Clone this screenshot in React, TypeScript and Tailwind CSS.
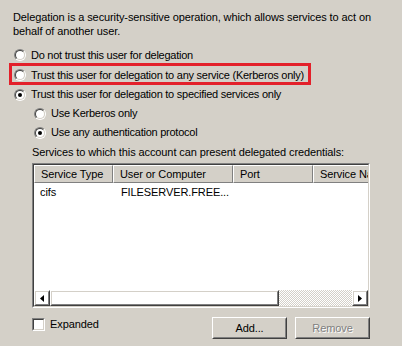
import React from 'react';

function Radio({ checked }: { checked?: boolean }) {
  return (
    <div className="w-[12px] h-[12px] rounded-full border border-t-[#808080] border-l-[#808080] border-b-white border-r-white shrink-0">
      <div className="w-full h-full rounded-full border border-t-[#404040] border-l-[#404040] border-b-[#d4d0c8] border-r-[#d4d0c8] bg-white flex items-center justify-center">
        {checked && <div className="w-[4px] h-[4px] rounded-full bg-black" />}
      </div>
    </div>
  );
}

function RadioRow({ checked, label, h = 'h-[19px]' }: { checked?: boolean; label: string; h?: string }) {
  return (
    <div className={`flex items-center gap-[5px] ${h}`}>
      <Radio checked={checked} />
      <span className="tracking-[-0.25px]">{label}</span>
    </div>
  );
}

function Raised({ children, className = '' }: { children?: React.ReactNode; className?: string }) {
  return (
    <div className={`border border-t-white border-l-white border-b-[#404040] border-r-[#404040] ${className}`}>
      <div className="w-full h-full border border-t-[#d4d0c8] border-l-[#d4d0c8] border-b-[#808080] border-r-[#808080] flex items-center justify-center">
        {children}
      </div>
    </div>
  );
}

const columns = [
  { name: 'Service Type', w: 'w-[79px]' },
  { name: 'User or Computer', w: 'w-[120px]' },
  { name: 'Port', w: 'w-[80px]' },
  { name: 'Service Name', w: 'w-[90px]' },
];

export default function App() {
  return (
    <div className="w-[402px] h-[346px] bg-[#d4d0c8] text-black text-[11px] tracking-[-0.1px] font-['Liberation_Sans',Arial,sans-serif] overflow-hidden pl-[13px] pt-[10px]">
      <p className="leading-[14px]">
        Delegation is a security-sensitive operation, which allows services to act on
        <br />
        behalf of another user.
      </p>

      <div className="mt-[7px] flex flex-col pl-[1px]">
        <RadioRow label="Do not trust this user for delegation" h="h-[20px]" />
        <div className="relative">
          <RadioRow label="Trust this user for delegation to any service (Kerberos only)" h="h-[20px]" />
          <div className="absolute -left-[5px] -top-[2px] w-[302px] h-[22px] border-[3px] border-[#e3202a]" />
        </div>
        <RadioRow checked label="Trust this user for delegation to specified services only" />
        <div className="pl-[20px] flex flex-col">
          <RadioRow label="Use Kerberos only" />
          <RadioRow checked label="Use any authentication protocol" />
        </div>
      </div>

      <div className="ml-[19px] w-[338px]">
        <div className="h-[20px] leading-[20px]">Services to which this account can present delegated credentials:</div>

        <div className="mt-[1px] h-[145px] border border-t-[#808080] border-l-[#808080] border-b-white border-r-white">
          <div className="w-full h-full border border-t-[#404040] border-l-[#404040] border-b-[#d4d0c8] border-r-[#d4d0c8] bg-white flex flex-col overflow-hidden">
            <div className="flex h-[18px] shrink-0 bg-[#d4d0c8]">
              {columns.map((c) => (
                <div
                  key={c.name}
                  className={`${c.w} shrink-0 border border-t-white border-l-white border-b-[#808080] border-r-[#808080] pl-[6px] leading-[16px] whitespace-nowrap overflow-hidden`}
                >
                  {c.name}
                </div>
              ))}
            </div>
            <div className="flex h-[17px] leading-[17px] mt-[1px]">
              <div className="w-[79px] pl-[6px]">cifs</div>
              <div className="w-[120px] pl-[8px]">FILESERVER.FREE...</div>
            </div>
            <div className="flex-1" />
            <div className="flex h-[16px] shrink-0">
              <Raised className="w-[16px] h-[16px]">
                <svg width="4" height="7" viewBox="0 0 4 7">
                  <path d="M4 0 L0 3.5 L4 7 Z" fill="#000" />
                </svg>
              </Raised>
              <Raised className="w-[229px] h-[16px]" />
              <div className="flex-1 bg-[conic-gradient(#ffffff_25%,#d4d0c8_0_50%,#ffffff_0_75%,#d4d0c8_0)] bg-[length:2px_2px]" />
              <Raised className="w-[16px] h-[16px]">
                <svg width="4" height="7" viewBox="0 0 4 7">
                  <path d="M0 0 L4 3.5 L0 7 Z" fill="#000" />
                </svg>
              </Raised>
            </div>
          </div>
        </div>

        <div className="mt-[9px] flex items-start justify-between">
          <div className="flex items-center gap-[5px] mt-[1px]">
            <div className="w-[13px] h-[13px] border border-t-[#808080] border-l-[#808080] border-b-white border-r-white">
              <div className="w-full h-full border border-t-[#404040] border-l-[#404040] border-b-[#d4d0c8] border-r-[#d4d0c8] bg-white" />
            </div>
            <span className="leading-[13px]">Expanded</span>
          </div>
          <div className="flex gap-[8px]">
            <Raised className="w-[75px] h-[22px]">
              <span>Add...</span>
            </Raised>
            <Raised className="w-[75px] h-[22px]">
              <span className="text-[#808080] [text-shadow:1px_1px_0_#ffffff]">Remove</span>
            </Raised>
          </div>
        </div>
      </div>
    </div>
  );
}
